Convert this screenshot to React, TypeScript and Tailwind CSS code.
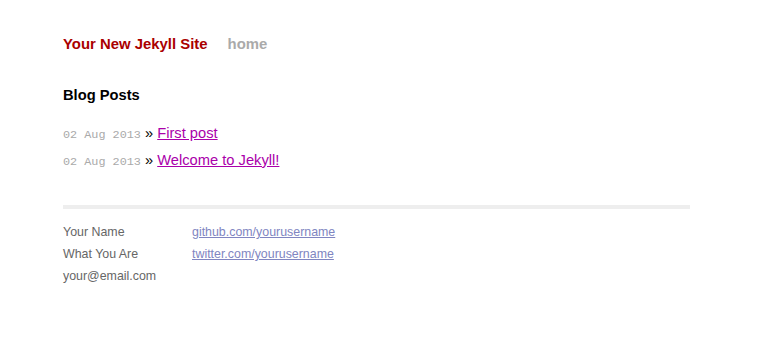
const posts = [
  { date: '02 Aug 2013', title: 'First post' },
  { date: '02 Aug 2013', title: 'Welcome to Jekyll!' },
];

export default function App() {
  return (
    <div className="min-h-[354px] bg-white pt-[34px] font-['Liberation_Sans',Arial,sans-serif] text-[14.7px] text-black">
      <div className="ml-[63px] w-[627px]">
        <div className="flex h-5 items-baseline text-[14.9px] leading-5 font-bold">
          <a className="text-[#a00] no-underline">Your New Jekyll Site</a>
          <a className="ml-[20px] text-[#aaa] no-underline">home</a>
        </div>

        <h2 className="mt-[31px] leading-5 font-bold">Blog Posts</h2>

        <ul className="mt-[18px] flex flex-col gap-[5px]">
          {posts.map((p, i) => (
            <li key={i} className="leading-5">
              <span className="font-['Liberation_Mono','Courier_New',monospace] text-[11.8px] text-[#aaa]">{p.date}</span>{' '}
              » <a className="text-[#a0a] underline">{p.title}</a>
            </li>
          ))}
        </ul>

        <div className="mt-[33px] flex border-t-4 border-[#eee] pt-[12px] text-[12.4px] leading-[22px] text-[#666]">
          <div className="w-[129px]">
            <div>Your Name</div>
            <div>What You Are</div>
            <div>your@email.com</div>
          </div>
          <div>
            <div><a className="text-[#8085c1] underline">github.com/yourusername</a></div>
            <div><a className="text-[#8085c1] underline">twitter.com/yourusername</a></div>
          </div>
        </div>
      </div>
    </div>
  );
}
